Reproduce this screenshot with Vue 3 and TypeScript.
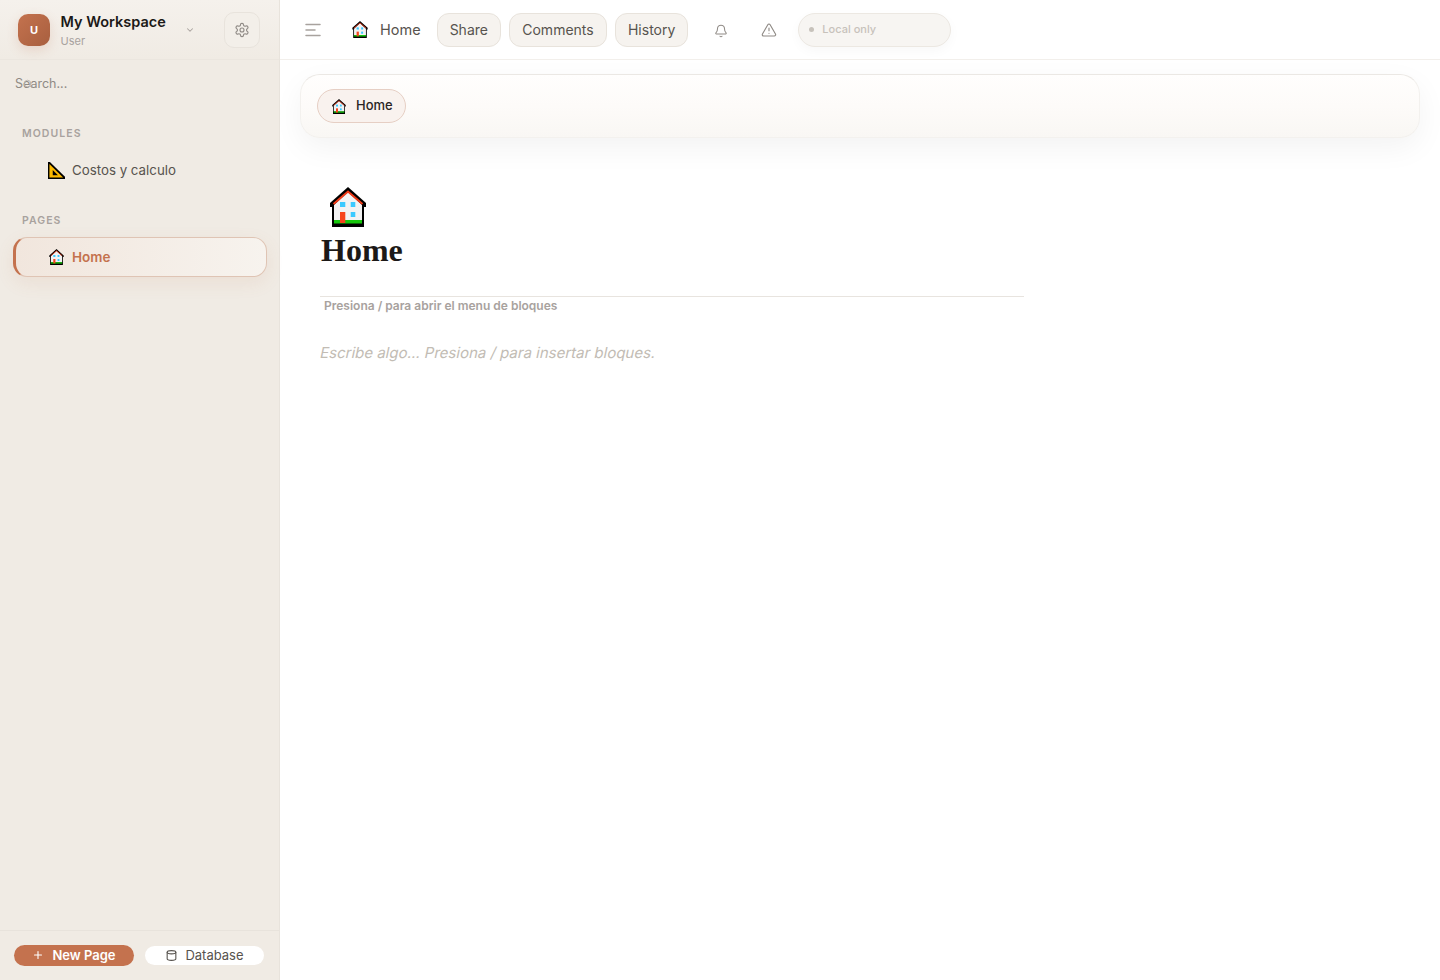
<script setup lang="ts">
const actions = ['Share', 'Comments', 'History']
</script>

<template>
  <div class="app">
    <svg class="defs" width="0" height="0" aria-hidden="true">
      <symbol id="house" viewBox="0 0 36 40">
        <path d="M18 0 36 16v4h-2v20H2V20H0v-4z" fill="#000" />
        <path d="M18 5 32 18v15H4V18z" fill="#f2f2f2" />
        <path d="M3.500 17 18 4.500 32.500 17" fill="none" stroke="#f03a17" stroke-width="2" />
        <rect x="4" y="33" width="28" height="3.500" fill="#16c60c" />
        <rect x="10" y="15" width="5.300" height="5" fill="#3ac9ff" />
        <rect x="20.700" y="15" width="4.600" height="5" fill="#3ac9ff" />
        <rect x="20.700" y="25" width="4.600" height="5" fill="#3ac9ff" />
        <rect x="10" y="25" width="5.300" height="11" fill="#f7441c" />
      </symbol>
      <symbol id="triangle" viewBox="0 0 18 18">
        <path d="M0 0h2l16 15.500V18H0z" fill="#000" />
        <path d="M1.500 2 16 16.500H1.500z" fill="#fcb900" />
        <path d="M5 8.500 10.500 14H5z" fill="#000" />
      </symbol>
    </svg>

    <aside class="sidebar">
      <header class="side-head">
        <div class="avatar">U</div>
        <div class="workspace">
          <div class="ws-name">My Workspace</div>
          <div class="ws-user">User</div>
        </div>
        <svg class="chevron" width="10" height="10" viewBox="0 0 24 24" fill="none" stroke="#a8a29e" stroke-width="2.5" stroke-linecap="round" stroke-linejoin="round"><path d="m6 9 6 6 6-6" /></svg>
        <button class="gear">
          <svg width="16" height="16" viewBox="0 0 24 24" fill="none" stroke="#8f8a85" stroke-width="1.7" stroke-linecap="round" stroke-linejoin="round"><path d="M12.220 2h-.44a2 2 0 0 0-2 2v.18a2 2 0 0 1-1 1.730l-.43.25a2 2 0 0 1-2 0l-.15-.08a2 2 0 0 0-2.730.73l-.22.38a2 2 0 0 0 .73 2.730l.15.1a2 2 0 0 1 1 1.720v.51a2 2 0 0 1-1 1.740l-.15.09a2 2 0 0 0-.73 2.730l.22.38a2 2 0 0 0 2.730.73l.15-.08a2 2 0 0 1 2 0l.43.25a2 2 0 0 1 1 1.730V20a2 2 0 0 0 2 2h.44a2 2 0 0 0 2-2v-.18a2 2 0 0 1 1-1.730l.43-.25a2 2 0 0 1 2 0l.15.08a2 2 0 0 0 2.730-.73l.22-.39a2 2 0 0 0-.73-2.730l-.15-.08a2 2 0 0 1-1-1.740v-.5a2 2 0 0 1 1-1.740l.15-.09a2 2 0 0 0 .73-2.730l-.22-.38a2 2 0 0 0-2.730-.73l-.15.08a2 2 0 0 1-2 0l-.43-.25a2 2 0 0 1-1-1.730V4a2 2 0 0 0-2-2z" /><circle cx="12" cy="12" r="3" /></svg>
        </button>
      </header>

      <div class="search">
        <span>Search...</span>
        <svg class="search-icon" width="10" height="10" viewBox="0 0 24 24" fill="none" stroke="#b5afa7" stroke-width="2" stroke-linecap="round"><circle cx="11" cy="11" r="8" /><path d="m21 21-4.300-4.300" /></svg>
      </div>

      <nav class="nav">
        <div class="nav-label first">MODULES</div>
        <div class="nav-item">
          <svg class="nav-icon" width="17" height="17"><use href="#triangle" /></svg>
          <span>Costos y calculo</span>
        </div>
        <div class="nav-label">PAGES</div>
        <div class="nav-item active">
          <svg class="nav-icon" width="16" height="16"><use href="#house" /></svg>
          <span>Home</span>
        </div>
      </nav>

      <footer class="side-foot">
        <button class="new-page">
          <svg width="12" height="12" viewBox="0 0 24 24" fill="none" stroke="#fff" stroke-width="2.2" stroke-linecap="round"><path d="M5 12h14M12 5v14" /></svg>
          New Page
        </button>
        <button class="database">
          <svg width="13" height="13" viewBox="0 0 24 24" fill="none" stroke="#57534e" stroke-width="2" stroke-linecap="round" stroke-linejoin="round"><path d="M4 6v12c0 1.700 3.600 3 8 3s8-1.300 8-3V6" /><ellipse cx="12" cy="6" rx="8" ry="3" /></svg>
          Database
        </button>
      </footer>
    </aside>

    <main class="main">
      <div class="topbar">
        <svg class="menu" width="18" height="18" viewBox="0 0 18 18" fill="none" stroke="#a8a29e" stroke-width="1.5" stroke-linecap="round"><path d="M2 3.500h14M2 9h9M2 14.500h14" /></svg>
        <svg class="top-icon" width="16" height="17"><use href="#house" /></svg>
        <span class="top-title">Home</span>
        <button v-for="a in actions" :key="a" class="action">{{ a }}</button>
        <svg class="bell" width="14" height="14" viewBox="0 0 24 24" fill="none" stroke="#8f8a85" stroke-width="1.800" stroke-linecap="round" stroke-linejoin="round"><path d="M10.300 21a2 2 0 0 0 3.400 0" /><path d="M3.300 15.300A1 1 0 0 0 4 17h16a1 1 0 0 0 .7-1.700C19.400 14 18 12.500 18 8A6 6 0 0 0 6 8c0 4.500-1.400 6-2.700 7.300" /></svg>
        <svg class="warn" width="16" height="16" viewBox="0 0 24 24" fill="none" stroke="#8f8a85" stroke-width="1.700" stroke-linecap="round" stroke-linejoin="round"><path d="m21.700 18-8-14a2 2 0 0 0-3.500 0l-8 14A2 2 0 0 0 4 21h16a2 2 0 0 0 1.700-3" /><path d="M12 9v4M12 17h.01" /></svg>
        <div class="status"><i class="dot"></i><span>Local only</span></div>
      </div>

      <section class="tabs-card">
        <div class="chip">
          <svg class="chip-icon" width="14" height="15"><use href="#house" /></svg>
          <span>Home</span>
        </div>
      </section>

      <article class="page">
        <svg class="page-icon" width="36" height="40"><use href="#house" /></svg>
        <h1 class="page-title">Home</h1>
        <div class="hint">Presiona / para abrir el menu de bloques</div>
        <p class="placeholder">Escribe algo... Presiona / para insertar bloques.</p>
      </article>
    </main>
  </div>
</template>

<style>
html,
body {
  margin: 0;
  background: #fff;
}
</style>

<style scoped>
.app {
  display: flex;
  height: 980px;
  overflow: hidden;
  font-family: Inter, "Liberation Sans", sans-serif;
  color: #57534e;
}

.defs {
  position: absolute;
}

button {
  font-family: inherit;
  cursor: pointer;
}

.sidebar {
  display: flex;
  flex-direction: column;
  flex: none;
  width: 279px;
  border-right: 1px solid #e8e3dc;
  background: #f0ebe4;
}

.side-head {
  display: flex;
  align-items: center;
  height: 59px;
  padding: 0 19px 0 18px;
  border-bottom: 1px solid #ebe6df;
  background: linear-gradient(180deg, #f5f1ec, #f0ebe4);
}

.avatar {
  display: flex;
  align-items: center;
  justify-content: center;
  flex: none;
  width: 32px;
  height: 32px;
  border-radius: 10px;
  background: linear-gradient(135deg, #c4724e, #a85f3f);
  box-shadow: 0 4px 12px rgb(196 114 78 / 20%);
  color: #fff;
  font-size: 11px;
  font-weight: 700;
}

.workspace {
  flex: 1;
  margin-left: 10.5px;
}

.ws-name {
  color: #1c1917;
  font-size: 14.5px;
  font-weight: 600;
  line-height: 20px;
}

.ws-user {
  margin-top: 2px;
  color: #a8a29e;
  font-size: 11px;
  line-height: 14px;
}

.chevron {
  flex: none;
  margin-right: 29px;
}

.gear {
  display: flex;
  align-items: center;
  justify-content: center;
  flex: none;
  width: 36px;
  height: 36px;
  padding: 0;
  border: 1px solid #e8e3dc;
  border-radius: 10px;
  background: #f3efe9;
}

.search {
  position: relative;
  height: 48px;
  padding-left: 15px;
  color: #8f8a85;
  font-size: 12.5px;
  line-height: 47px;
}

.search-icon {
  position: absolute;
  top: 19px;
  left: 23px;
}

.nav {
  flex: 1;
  padding: 0 12px 0 13px;
}

.nav-label {
  margin-top: 24px;
  padding-left: 9px;
  color: #a8a29e;
  font-size: 10.5px;
  font-weight: 600;
  letter-spacing: 0.1em;
  line-height: 14px;
}

.nav-label.first {
  margin-top: 19px;
}

.nav-item {
  display: flex;
  align-items: center;
  box-sizing: border-box;
  height: 40px;
  margin-top: 9px;
  padding-left: 35px;
  font-size: 13.3px;
}

.nav-icon {
  flex: none;
  width: 17px;
  margin-right: 7px;
}

.nav-item.active {
  position: relative;
  margin-top: 9px;
  border: 1px solid #dfc4b4;
  border-left: 3px solid #c4724e;
  border-radius: 14px;
  padding-left: 32px;
  background: linear-gradient(90deg, #f1e6dd, #f7f3ee);
  box-shadow: 0 6px 18px rgb(196 114 78 / 10%);
  color: #c4724e;
  font-size: 13.5px;
  font-weight: 600;
}

.side-foot {
  display: flex;
  align-items: center;
  gap: 11px;
  height: 49px;
  padding: 0 15px 0 14px;
  border-top: 1px solid #e8e3dc;
}

.new-page {
  display: flex;
  align-items: center;
  justify-content: center;
  gap: 8px;
  flex: none;
  width: 120px;
  height: 21px;
  padding: 0 0 1px;
  border: 0;
  border-radius: 11px;
  background: #c4724e;
  color: #fff;
  font-size: 13px;
  font-weight: 600;
}

.database {
  display: flex;
  align-items: center;
  justify-content: center;
  gap: 7px;
  flex: 1;
  height: 19px;
  padding: 0 0 1px;
  border: 0;
  border-radius: 10px;
  background: #fff;
  color: #57534e;
  font-size: 13px;
}

.main {
  flex: 1;
  min-width: 0;
}

.topbar {
  display: flex;
  align-items: center;
  box-sizing: border-box;
  height: 60px;
  padding-left: 24px;
  border-bottom: 1px solid #f2efeb;
}

.menu {
  margin-right: 30px;
}

.top-icon {
  margin-right: 12px;
}

.top-title {
  margin-right: 16px;
  font-size: 14.5px;
}

.action {
  height: 34px;
  margin-right: 8px;
  padding: 0 12px;
  border: 1px solid #e8e3dc;
  border-radius: 12px;
  background: #f6f3ef;
  color: #57534e;
  font-size: 14px;
}

.action:nth-of-type(2) {
  width: 98px;
}

.bell {
  margin-top: 2px;
  margin-left: 18px;
}

.warn {
  margin-left: 33px;
}

.status {
  display: flex;
  align-items: center;
  box-sizing: border-box;
  width: 153px;
  height: 34px;
  margin-left: 21px;
  padding-left: 10px;
  border: 1px solid #ece8e2;
  border-radius: 17px;
  background: #f7f5f2;
  box-shadow: 0 4px 12px rgb(0 0 0 / 3%);
  color: #c7c2bb;
  font-size: 11px;
  font-weight: 500;
}

.status span {
  margin-bottom: 2px;
}

.dot {
  width: 5px;
  height: 5px;
  margin-right: 8px;
  border-radius: 50%;
  background: #c7c2bb;
}

.tabs-card {
  box-sizing: border-box;
  height: 64px;
  margin: 14px 20px 0;
  padding: 14px 16px;
  border: 1px solid #f3f1ee;
  border-top-color: #ebe8e4;
  border-radius: 20px;
  background: linear-gradient(180deg, #fffefd, #fdfbf9 50%, #f9f7f4);
  box-shadow: 0 10px 30px rgb(0 0 0 / 5%);
}

.chip {
  display: inline-flex;
  align-items: center;
  box-sizing: border-box;
  height: 34px;
  padding: 0 12px 0 14px;
  border: 1px solid #e6cfc4;
  border-radius: 17px;
  background: #f9f2ee;
  color: #292524;
  font-size: 13px;
  font-weight: 500;
}

.chip-icon {
  margin-right: 10px;
}

.chip span {
  margin-bottom: 2px;
}

.page {
  width: 704px;
  padding: 49px 0 0 40px;
}

.page-icon {
  display: block;
  margin-left: 10px;
}

.page-title {
  margin: 4px 0 0 1px;
  color: #1c1917;
  font-family: "Liberation Serif", serif;
  font-size: 32px;
  font-weight: 700;
  line-height: 38px;
}

.hint {
  margin-top: 27px;
  padding: 1px 4px 2px;
  border-top: 1px solid #e8e4df;
  color: #a8a29e;
  font-size: 12px;
  font-weight: 600;
  line-height: 16px;
}

/* inter's true italic has other letterforms, the reference is a slanted roman */
.placeholder {
  margin: 26px 0 0 -2px;
  color: #c2bcb4;
  font-size: 15px;
  line-height: 22px;
  transform: skewX(-12deg);
  transform-origin: left bottom;
}
</style>
